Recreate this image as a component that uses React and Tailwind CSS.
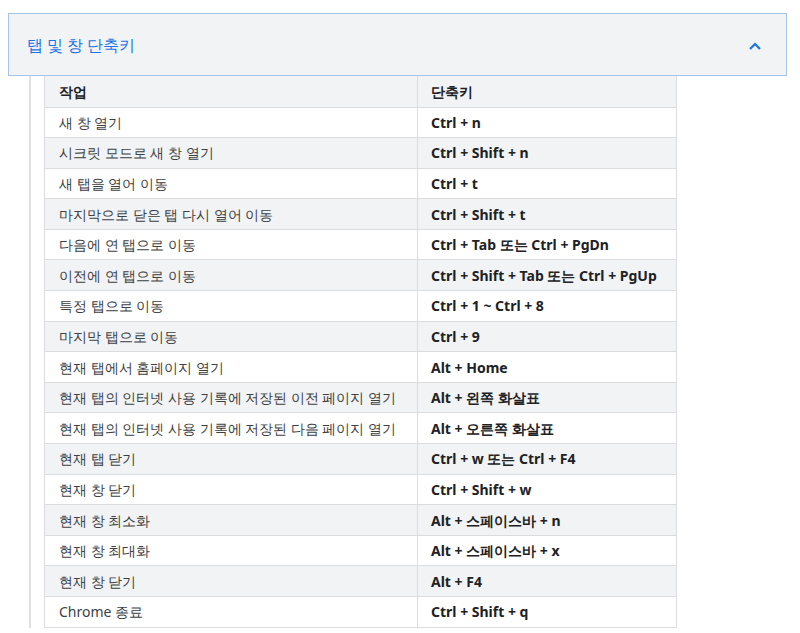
const rows = [
  ['새 창 열기', 'Ctrl + n'],
  ['시크릿 모드로 새 창 열기', 'Ctrl + Shift + n'],
  ['새 탭을 열어 이동', 'Ctrl + t'],
  ['마지막으로 닫은 탭 다시 열어 이동', 'Ctrl + Shift + t'],
  ['다음에 연 탭으로 이동', 'Ctrl + Tab 또는 Ctrl + PgDn'],
  ['이전에 연 탭으로 이동', 'Ctrl + Shift + Tab 또는 Ctrl + PgUp'],
  ['특정 탭으로 이동', 'Ctrl + 1 ~ Ctrl + 8'],
  ['마지막 탭으로 이동', 'Ctrl + 9'],
  ['현재 탭에서 홈페이지 열기', 'Alt + Home'],
  ['현재 탭의 인터넷 사용 기록에 저장된 이전 페이지 열기', 'Alt + 왼쪽 화살표'],
  ['현재 탭의 인터넷 사용 기록에 저장된 다음 페이지 열기', 'Alt + 오른쪽 화살표'],
  ['현재 탭 닫기', 'Ctrl + w 또는 Ctrl + F4'],
  ['현재 창 닫기', 'Ctrl + Shift + w'],
  ['현재 창 최소화', 'Alt + 스페이스바 + n'],
  ['현재 창 최대화', 'Alt + 스페이스바 + x'],
  ['현재 창 닫기', 'Alt + F4'],
  ['Chrome 종료', 'Ctrl + Shift + q'],
]

export default function App() {
  return (
    <div className="w-[800px] h-[633px] bg-white overflow-hidden pt-[13px] pl-[8px] font-['Roboto','Noto_Sans_CJK_KR',sans-serif] text-[14px] text-[#202124]">
      <div className="w-[779px] h-[63px] bg-[#f1f3f4] border border-[#a6c3ee] flex items-center justify-between pl-[18px] pr-[24px]">
        <span className="text-[#1a73e8] text-[16px]">탭 및 창 단축키</span>
        <svg width="14" height="10" viewBox="0 0 14 10" fill="none" className="mt-[2px]">
          <path d="M2 8 L7 3 L12 8" stroke="#1a73e8" strokeWidth="2.2" />
        </svg>
      </div>
      <div className="ml-[21px] border-l-2 border-[#e0e0e0] pl-[13px]">
        <table className="w-[633px] border-collapse">
          <thead>
            <tr className="bg-[#f1f3f4] h-[31px]">
              <th className="w-[373px] text-left font-bold pl-[14px] border border-[#dadce0] border-t-0">작업</th>
              <th className="text-left font-bold pl-[13px] border border-[#dadce0] border-t-0">단축키</th>
            </tr>
          </thead>
          <tbody>
            {rows.map((r, i) => (
              <tr key={i} className={`h-[30.6px] ${i % 2 ? 'bg-[#f1f3f4]' : 'bg-white'}`}>
                <td className="pl-[14px] border border-[#dadce0] text-[#3c4043]">{r[0]}</td>
                <td className="pl-[13px] border border-[#dadce0] font-bold">{r[1]}</td>
              </tr>
            ))}
          </tbody>
        </table>
      </div>
    </div>
  )
}
